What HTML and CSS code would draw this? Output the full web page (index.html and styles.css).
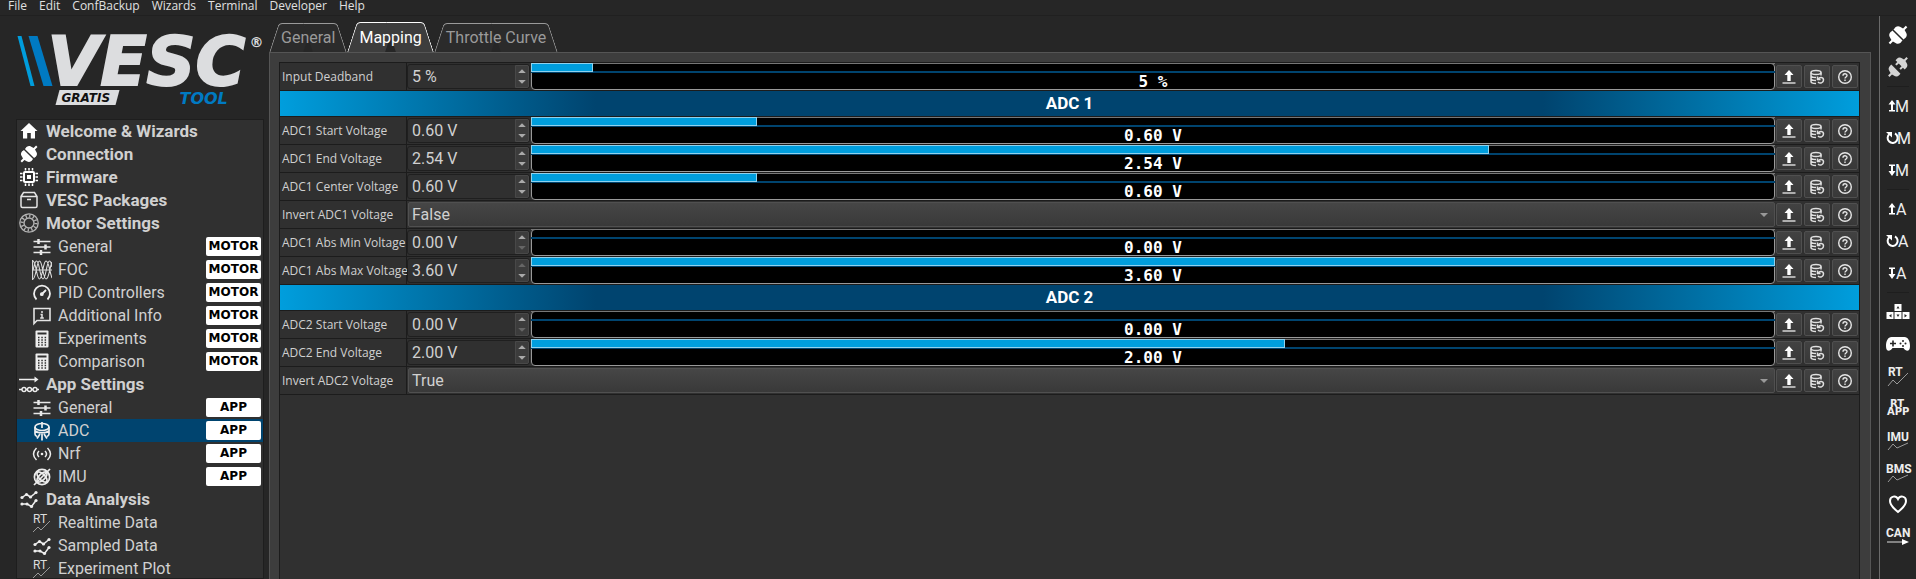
FILE: index.html
```html
<!DOCTYPE html>
<html lang="en">
<head>
    <meta charset="UTF-8">
    <meta name="viewport" content="width=device-width, initial-scale=1.0">
    <title>VESC Tool</title>
    <link rel="stylesheet" href="styles.css">
</head>
<body>
    <!-- Shared icons -->
    <svg class="sprite" aria-hidden="true">
        <symbol id="i-home" viewBox="0 0 20 20"><path d="M10 2 1.500 10H4v7.500h4.200V12h3.600v5.500H16V10h2.500z" fill="#fff"/></symbol>
        <symbol id="i-plug" viewBox="0 0 20 20"><g transform="rotate(-45 10 10)" fill="currentColor"><path d="M9.300 3.500v13H8c-1 .5-4 0-4.600-2.500L2.500 11H-1V9h3.500l.9-3C4 3.500 7 3 8 3.500zM10.700 3.500v13H12c1 .5 4 0 4.600-2.500l.9-3H21V9h-3.500l-.9-3C16 3.500 13 3 12 3.500z"/></g></symbol>
        <symbol id="i-unplug" viewBox="0 0 20 20"><g transform="rotate(-45 10 10)" fill="#d4d4d4"><path d="M7 3.500v13H5c-2 0-3.500-1-4-3.500l-.5-2H-3V9H.5L1 7c.5-2.500 2-3.500 4-3.500zM13 3.500V6h-3v2h3v4h-3v2h3v2.500h2c2 0 3.500-1 4-3.500l.5-2H23V9h-3.500L19 7c-.5-2.500-2-3.500-4-3.500z"/></g></symbol>
        <symbol id="i-chip" viewBox="0 0 20 20" fill="none" stroke="#fff"><rect x="5" y="5" width="10" height="10" rx="1" stroke-width="2"/><rect x="8" y="8" width="4" height="4" fill="#fff" stroke="none"/><path stroke-width="1.500" d="M6.500 1v2.500M10 1v2.500M13.500 1v2.500M6.500 16.500V19M10 16.500V19M13.500 16.500V19M1 6.500h2.500M1 10h2.500M1 13.500h2.500M16.500 6.500H19M16.500 10H19M16.500 13.500H19"/></symbol>
        <symbol id="i-box" viewBox="0 0 20 20" fill="none" stroke="#e4e4e4" stroke-width="1.500"><path d="M2 6.500 4.500 2.500h11L18 6.500V16a1.500 1.500 0 0 1-1.500 1.500h-13A1.500 1.500 0 0 1 2 16zM2 6.500h16M8 9.500h4"/></symbol>
        <symbol id="i-motor" viewBox="0 0 20 20" fill="none" stroke="#b4b4b4"><circle cx="10" cy="10" r="9.200" stroke-width="1.300"/><circle cx="10" cy="10" r="5" stroke-width="1.400"/><circle cx="10" cy="10" r="7" stroke-width="3" stroke-dasharray="1.300 2.360"/></symbol>
        <symbol id="i-sliders" viewBox="0 0 20 20" fill="none" stroke="#e8e8e8" stroke-width="1.500"><path d="M1.500 4.500h17M1.500 10h17M1.500 15.500h17"/><path stroke-width="2.500" d="M6.500 2v5M13.500 7.500v5M9 13v5"/></symbol>
        <symbol id="i-foc" viewBox="0 0 20 20" fill="none" stroke="#ddd" stroke-width="1.100"><path d="M.6 0v20M1 10h19"/><path d="M1 1c3 0 3.500 18 6.500 18S11 1 14 1s3 9 6 17M1 19C4 19 4.500 1 7.500 1S11 19 14 19s3-9 6-17M1 10c1.500-5 2-9 3.500-9 3 0 3.500 18 6.500 18s3.500-18 6.500-18c1 0 2 3 2.500 6"/></symbol>
        <symbol id="i-gauge" viewBox="0 0 20 20" fill="none" stroke="#eee" stroke-width="1.800"><path d="M4.500 16.500A8 8 0 1 1 15.500 16.500M9.500 11.500l4.500-4.500"/><circle cx="9.800" cy="11.200" r="1" fill="#eee"/></symbol>
        <symbol id="i-info" viewBox="0 0 20 20" fill="none" stroke="#e4e4e4" stroke-width="1.600"><path d="M2 17.500v-15h16v12H5z"/><path d="M10 5v2M8.500 8.500H10V12M8.200 12h3.600" stroke-width="1.500"/></symbol>
        <symbol id="i-calc" viewBox="0 0 20 20"><rect x="3.500" y="1.500" width="13" height="17" rx="1" fill="#eee"/><path d="M5.500 4.500h9" stroke="#303030" stroke-width="2"/><path d="M6 8.500h9M6 11h9M6 13.500h9M6 16h9" stroke="#303030" stroke-width="1.300" stroke-dasharray="1.500 1.800"/></symbol>
        <symbol id="i-app" viewBox="0 0 20 20" fill="none" stroke="#eee" stroke-width="1.400"><path d="M0 5.500h17M0 15.500h20"/><path d="M15.500 2.500 19.500 5.500l-4 3z" fill="#eee" stroke="none"/><circle cx="5" cy="15.500" r="2" fill="#303030"/><circle cx="10.500" cy="15.500" r="2" fill="#303030"/><circle cx="16" cy="15.500" r="2" fill="#303030"/></symbol>
        <symbol id="i-adc" viewBox="0 0 20 20" fill="none" stroke="#eee" stroke-width="1.700"><ellipse cx="10" cy="6" rx="7" ry="3.500"/><path d="M10 1v6M3 6v7c0 1 1 2 2 2.500M17 6v7c0 1-1 2-2 2.500M3 10c3 2.500 11 2.500 14 0M8 13l-3 4.500M10 13v6.500M12 13l3 4.500"/></symbol>
        <symbol id="i-nrf" viewBox="0 0 20 20" fill="none" stroke="#eee" stroke-width="1.500"><path d="M4.500 4c-4 4-4 8 0 12M7 7c-2 2-2 4 0 6M15.500 4c4 4 4 8 0 12M13 7c2 2 2 4 0 6"/><circle cx="10" cy="10" r="1.300" fill="#eee" stroke="none"/></symbol>
        <symbol id="i-imu" viewBox="0 0 20 20" fill="none" stroke="#eee" stroke-width="1.700"><circle cx="10" cy="10" r="7.600"/><ellipse cx="10" cy="10" rx="6.500" ry="3" transform="rotate(45 10 10)"/><ellipse cx="10" cy="10" rx="6.500" ry="3" transform="rotate(-45 10 10)"/><path d="M2 18 18 2"/></symbol>
        <symbol id="i-data" viewBox="0 0 20 20" fill="none" stroke="#eee" stroke-width="1.500"><path d="m3 8.500 4.500-3 4 2.500L17 3.500M3 15h5l4.500 2.500L17 11.500"/><g fill="#eee" stroke="none"><circle cx="3" cy="8.500" r="1.600"/><circle cx="7.500" cy="5.500" r="1.600"/><circle cx="11.500" cy="8" r="1.600"/><circle cx="17" cy="3.500" r="1.600"/><circle cx="3" cy="15" r="1.600"/><circle cx="8" cy="15" r="1.600"/><circle cx="12.500" cy="17.500" r="1.600"/><circle cx="17" cy="11.500" r="1.600"/></g></symbol>
        <symbol id="i-up" viewBox="0 0 16 16"><path d="M8 1 3.500 6H6.300v6h3.400V6h2.800z" fill="#fff"/><path d="M1.500 14h13" stroke="#ccc" stroke-width="1.600"/></symbol>
        <symbol id="i-db" viewBox="0 0 16 16" fill="none" stroke="#e0e0e0" stroke-width="1.500"><ellipse cx="7" cy="3.500" rx="5" ry="2"/><path d="M2 3.500v9c0 1.200 2 2 5 2M12 3.500v3M2 6.500c0 1.200 2 2 5 2M2 9.500c0 1.200 2 2 5 2"/><path d="M8.500 7.500v3h3M9.500 10c1-2.500 5-2 5 1s-3.500 4-5.500 2"/></symbol>
        <symbol id="i-help" viewBox="0 0 16 16" fill="none" stroke="#e6e6e6" stroke-width="1.400"><circle cx="8" cy="8" r="6.300"/><path d="M6 6.800c0-2.800 4-2.600 4-.3C10 8 8 8 8 9.600M8 10.600V12"/></symbol>
    </svg>

    <nav class="menubar">
        <a href="#">File</a>
        <a href="#">Edit</a>
        <a href="#">ConfBackup</a>
        <a href="#">Wizards</a>
        <a href="#">Terminal</a>
        <a href="#">Developer</a>
        <a href="#">Help</a>
    </nav>

    <div class="window">
        <aside class="sidebar">
            <svg class="logo" viewBox="0 0 247 80" role="img" aria-label="VESC Tool">
                <path d="M1 16h4l13 50h-4z" fill="#009ddc"/>
                <path d="M12 16h9l15 50h-9z" fill="#007ac2"/>
                <text class="logo-name" x="31" y="65">VESC</text>
                <text class="logo-reg" x="233" y="27">®</text>
                <path d="M43 70h60l-4 15H39z" fill="#dcdddf"/>
                <text class="logo-edition" x="45" y="82">GRATIS</text>
                <text class="logo-tool" x="163" y="84">TOOL</text>
            </svg>
            <nav class="page-list">
                <a class="page top" href="#"><svg class="icon"><use href="#i-home"/></svg>Welcome &amp; Wizards</a>
                <a class="page top" href="#"><svg class="icon"><use href="#i-plug"/></svg>Connection</a>
                <a class="page top" href="#"><svg class="icon"><use href="#i-chip"/></svg>Firmware</a>
                <a class="page top" href="#"><svg class="icon"><use href="#i-box"/></svg>VESC Packages</a>
                <a class="page top" href="#"><svg class="icon"><use href="#i-motor"/></svg>Motor Settings</a>
                <a class="page sub" href="#"><svg class="icon"><use href="#i-sliders"/></svg>General<span class="badge">MOTOR</span></a>
                <a class="page sub" href="#"><svg class="icon"><use href="#i-foc"/></svg>FOC<span class="badge">MOTOR</span></a>
                <a class="page sub" href="#"><svg class="icon"><use href="#i-gauge"/></svg>PID Controllers<span class="badge">MOTOR</span></a>
                <a class="page sub" href="#"><svg class="icon"><use href="#i-info"/></svg>Additional Info<span class="badge">MOTOR</span></a>
                <a class="page sub" href="#"><svg class="icon"><use href="#i-calc"/></svg>Experiments<span class="badge">MOTOR</span></a>
                <a class="page sub" href="#"><svg class="icon"><use href="#i-calc"/></svg>Comparison<span class="badge">MOTOR</span></a>
                <a class="page top" href="#"><svg class="icon"><use href="#i-app"/></svg>App Settings</a>
                <a class="page sub" href="#"><svg class="icon"><use href="#i-sliders"/></svg>General<span class="badge">APP</span></a>
                <a class="page sub selected" href="#"><svg class="icon"><use href="#i-adc"/></svg>ADC<span class="badge">APP</span></a>
                <a class="page sub" href="#"><svg class="icon"><use href="#i-nrf"/></svg>Nrf<span class="badge">APP</span></a>
                <a class="page sub" href="#"><svg class="icon"><use href="#i-imu"/></svg>IMU<span class="badge">APP</span></a>
                <a class="page top" href="#"><svg class="icon"><use href="#i-data"/></svg>Data Analysis</a>
                <a class="page sub" href="#"><svg class="icon" viewBox="0 0 20 20"><text class="rt-small" x="1" y="10">RT</text><path class="plot" d="m1 19 5-5 3 3 9-9"/></svg>Realtime Data</a>
                <a class="page sub" href="#"><svg class="icon"><use href="#i-data"/></svg>Sampled Data</a>
                <a class="page sub" href="#"><svg class="icon" viewBox="0 0 20 20"><text class="rt-small" x="1" y="10">RT</text><path class="plot" d="m1 19 5-5 3 3 9-9"/></svg>Experiment Plot</a>
            </nav>
        </aside>

        <main class="content">
            <div class="tabs">
                <button class="tab" type="button">General</button>
                <button class="tab active" type="button">Mapping</button>
                <button class="tab" type="button">Throttle Curve</button>
            </div>
            <div class="pane">
                <form class="params" id="params">
                    <!-- Parameter rows will be populated here -->
                </form>
            </div>
        </main>

        <div class="toolbar">
            <button type="button" aria-label="Connect"><svg class="tool plug" viewBox="0 0 24 24"><use href="#i-plug" x="1" y="1" width="22" height="22"/></svg></button>
            <button type="button" aria-label="Disconnect"><svg class="tool" viewBox="0 0 24 24"><use href="#i-unplug" x="2" y="2" width="20" height="20"/></svg></button>
            <hr>
            <button type="button" aria-label="Read motor configuration"><svg class="tool" viewBox="0 0 24 24"><path class="solid" d="M6 6 2.500 10.500H5V16H3v1.500h6V16H7v-5.500h2.500z"/><text x="9" y="18">M</text></svg></button>
            <button type="button" aria-label="Read default motor configuration"><svg class="tool" viewBox="0 0 24 24"><path class="line" d="M9 7.500A5 5 0 1 1 3.500 8"/><path class="solid" d="M0 6h6v5.500z"/><text x="11" y="18">M</text></svg></button>
            <button type="button" aria-label="Write motor configuration"><svg class="tool" viewBox="0 0 24 24"><path class="solid" d="M6 18 2.500 13H5V8H3V6.500h6V8H7v5h2.500z"/><text x="9" y="18">M</text></svg></button>
            <hr>
            <button type="button" aria-label="Read app configuration"><svg class="tool" viewBox="0 0 24 24"><path class="solid" d="M6 6 2.500 10.500H5V16H3v1.500h6V16H7v-5.500h2.500z"/><text x="10" y="18">A</text></svg></button>
            <button type="button" aria-label="Read default app configuration"><svg class="tool" viewBox="0 0 24 24"><path class="line" d="M9 7.500A5 5 0 1 1 3.500 8"/><path class="solid" d="M0 6h6v5.500z"/><text x="12" y="18">A</text></svg></button>
            <button type="button" aria-label="Write app configuration"><svg class="tool" viewBox="0 0 24 24"><path class="solid" d="M6 18 2.500 13H5V8H3V6.500h6V8H7v5h2.500z"/><text x="10" y="18">A</text></svg></button>
            <hr>
            <button type="button" aria-label="Keyboard control"><svg class="tool" viewBox="0 0 24 24"><path class="solid" d="M8.500 4h7v7h-7zM.5 12h7v7h-7zM8.500 12h7v7h-7zM16.500 12h7v7h-7z"/><path d="M10.500 8.500 12 6l1.500 2.500zM5.500 14v3.500L3 15.700zM10.500 14.500h3L12 17zM18.500 14v3.500l2.500-1.800z" fill="#262626"/></svg></button>
            <button type="button" aria-label="Gamepad control"><svg class="tool" viewBox="0 0 24 24"><path class="solid" d="M5.500 5h13C22 5 24 9 24 14c0 6-4 6-6.500 2h-11C4 20 0 20 0 14 0 9 2 5 5.500 5z"/><path d="M4 11.500h6M7 8.500v6" stroke="#262626" stroke-width="1.600"/><g fill="#262626"><circle cx="17" cy="9" r="1"/><circle cx="17" cy="14" r="1"/><circle cx="14.500" cy="11.500" r="1"/><circle cx="19.500" cy="11.500" r="1"/></g></svg></button>
            <button type="button" aria-label="Realtime data"><svg class="tool" viewBox="0 0 24 24"><text class="caption" x="2" y="12">RT</text><path class="plot" d="m2 22 5-6 4 4 11-11"/></svg></button>
            <button type="button" aria-label="Realtime app data"><svg class="tool" viewBox="0 0 24 24"><text class="heavy" x="4" y="11">RT</text><text class="heavy" x="1" y="19">APP</text></svg></button>
            <button type="button" aria-label="IMU data"><svg class="tool" viewBox="0 0 24 24"><text class="caption" x="1" y="13">IMU</text><path class="plot" d="m2 22 5-6 4 4 11-5"/></svg></button>
            <button type="button" aria-label="BMS data"><svg class="tool" viewBox="0 0 24 24"><text class="caption" x="0" y="13">BMS</text><path class="plot" d="m2 22 5-6 4 4 11-5"/></svg></button>
            <button type="button" aria-label="Keep alive"><svg class="tool" viewBox="0 0 24 24"><path class="line" d="M12 20C7 16 4 13 4 9c0-5 6-6 8-2 2-4 8-3 8 2 0 4-3 7-8 11z"/></svg></button>
            <button type="button" aria-label="CAN forwarding"><svg class="tool" viewBox="0 0 24 24"><text class="caption" x="0" y="13">CAN</text><path d="M1 18h17" stroke="#ddd"/><path class="solid" d="m16 15 7 3-7 3z"/></svg></button>
        </div>
    </div>

    <script>
        const params = [
            { label: 'Input Deadband', value: '5 %', fill: 5 },
            { title: 'ADC 1' },
            { label: 'ADC1 Start Voltage', value: '0.60 V', fill: 18.2 },
            { label: 'ADC1 End Voltage', value: '2.54 V', fill: 77 },
            { label: 'ADC1 Center Voltage', value: '0.60 V', fill: 18.2 },
            { label: 'Invert ADC1 Voltage', options: ['False', 'True'] },
            { label: 'ADC1 Abs Min Voltage', value: '0.00 V', fill: 0 },
            { label: 'ADC1 Abs Max Voltage', value: '3.60 V', fill: 100 },
            { title: 'ADC 2' },
            { label: 'ADC2 Start Voltage', value: '0.00 V', fill: 0 },
            { label: 'ADC2 End Voltage', value: '2.00 V', fill: 60.6 },
            { label: 'Invert ADC2 Voltage', options: ['True', 'False'] },
        ];

        // Spin box and bar for a number, drop-down for a boolean
        function renderEditor(param, id) {
            if (param.options) {
                return `
                    <div class="combo">
                        <select id="${id}">${param.options.map(o => `<option>${o}</option>`).join('')}</select>
                    </div>`;
            }
            return `
                <div class="spin">
                    <input type="text" id="${id}" value="${param.value}">
                    <div class="steps">
                        <button type="button" class="step up" aria-label="Increase" ${param.fill === 100 ? 'disabled' : ''}></button>
                        <button type="button" class="step down" aria-label="Decrease" ${param.fill === 0 ? 'disabled' : ''}></button>
                    </div>
                </div>
                <div class="bar">
                    <div class="track">${param.fill ? `<div class="fill" style="width: ${param.fill}%"></div>` : ''}</div>
                    <span class="bar-text">${param.value}</span>
                </div>`;
        }

        document.getElementById('params').innerHTML = params.map((param, i) => {
            if (param.title) {
                return `<h2 class="group">${param.title}</h2>`;
            }
            const id = `param-${i}`;
            return `
                <div class="param">
                    <label for="${id}">${param.label}</label>
                    ${renderEditor(param, id)}
                    <div class="actions">
                        <button type="button" aria-label="Read current"><svg><use href="#i-up"/></svg></button>
                        <button type="button" aria-label="Read default"><svg><use href="#i-db"/></svg></button>
                        <button type="button" aria-label="Help"><svg><use href="#i-help"/></svg></button>
                    </div>
                </div>`;
        }).join('');
    </script>
</body>
</html>
```
FILE: styles.css
```css
* {
    box-sizing: border-box;
}
body {
    font-family: Roboto, sans-serif;
    font-size: 16px;
    margin: 0;
    height: 100vh;
    overflow: hidden;
    display: flex;
    flex-direction: column;
    background-color: #262626;
    color: #d0d0d0;
}
a {
    color: inherit;
    text-decoration: none;
}
button {
    font: inherit;
    color: inherit;
    padding: 0;
    border: none;
    background: none;
}
.sprite {
    display: none;
}

/* Menu bar */
.menubar {
    display: flex;
    gap: 12px;
    height: 16px;
    padding-left: 8px;
    border-bottom: 1px solid #202020;
    font-family: "Open Sans", sans-serif;
    font-size: 12px;
    line-height: 12px;
    color: #e0e0e0;
}
.window {
    flex: 1;
    min-height: 0;
    display: flex;
}

/* Sidebar */
.sidebar {
    width: 264px;
    padding-left: 16px;
    display: flex;
    flex-direction: column;
}
.logo {
    flex: none;
    height: 80px;
    margin: 4px 0 19px;
    overflow: visible;
    font-family: "DejaVu Sans", sans-serif;
    font-weight: bold;
    font-style: italic;
}
.logo-name {
    font-size: 68px;
    fill: #dcdddf;
    stroke: #dcdddf;
    stroke-width: 2px;
}
.logo-reg {
    font-size: 14px;
    font-style: normal;
    fill: #dcdddf;
}
.logo-edition {
    font-size: 12px;
    fill: #111;
}
.logo-tool {
    font-size: 16px;
    fill: #007ac2;
}
.page-list {
    flex: 1;
    min-height: 0;
    overflow: hidden;
    background-color: #303030;
    border: 1px solid #1e1e1e;
}
.page {
    display: flex;
    align-items: center;
    height: 23px;
    padding: 0 2px;
}
.page.top {
    padding-bottom: 1px;
    font-size: 17px;
    font-weight: bold;
    gap: 7px;
}
.page.sub {
    padding-left: 15px;
    gap: 6px;
}
.page.selected {
    background-color: #00446f;
}
.icon {
    width: 20px;
    height: 20px;
    color: #fff;
}
.badge {
    margin-left: auto;
    width: 55px;
    height: 19px;
    border-radius: 2px;
    background-color: #fff;
    color: #000;
    font: bold 12px/19px "DejaVu Sans", sans-serif;
    text-align: center;
}
.rt-small {
    font: 12px Roboto, sans-serif;
    fill: #ddd;
}
.plot {
    fill: none;
    stroke: #999;
}

/* Tabs */
.content {
    flex: 1;
    min-width: 0;
    padding: 6px 8px 0 5px;
    display: flex;
    flex-direction: column;
}
.tabs {
    display: flex;
    align-items: flex-end;
    height: 30px;
}
.tab {
    position: relative;
    isolation: isolate;
    height: 29px;
    padding: 0 12px;
    color: #9a9a9a;
}
.tab::before,
.tab::after {
    content: "";
    position: absolute;
    z-index: -1;
    top: 0;
    bottom: 0;
    background-color: #2b2b2b;
    border-top: 1px solid #9a9a9a;
}
.tab::before {
    left: 5px;
    right: 50%;
    border-left: 1px solid #9a9a9a;
    border-top-left-radius: 4px;
    transform: skewX(-18deg);
}
.tab::after {
    left: 50%;
    right: 5px;
    border-right: 1px solid #9a9a9a;
    border-top-right-radius: 4px;
    transform: skewX(18deg);
}
.tab.active {
    height: 30px;
    color: #fff;
}
.tab.active::before,
.tab.active::after {
    background-color: #3d3d3d;
    border-color: #fff;
}
.pane {
    flex: 1;
    min-height: 0;
    padding: 9px 10px 0 9px;
    background-color: #3d3d3d;
    border: 1px solid #555;
    border-bottom: none;
}
.params {
    height: 100%;
    background-color: #303030;
    border: 1px solid #1c1c1c;
    border-bottom: none;
}

/* Parameter rows */
.param {
    display: flex;
    height: 28px;
    border-bottom: 1px solid #1c1c1c;
}
.param label {
    width: 127px;
    padding-left: 2px;
    border-right: 1px solid #1c1c1c;
    font-family: "Open Sans", sans-serif;
    font-size: 12px;
    line-height: 28px;
    white-space: nowrap;
}
.group {
    height: 26px;
    margin: 0;
    border-bottom: 1px solid #1c1c1c;
    background: linear-gradient(to right, #009edd, #00446f 20%, #00446f 80%, #009edd);
    color: #fff;
    font-size: 17px;
    line-height: 25px;
    text-align: center;
}
.spin {
    display: flex;
    width: 123px;
    height: 25px;
    margin: 1px 1px 0 0;
    border: 1px solid #1f1f1f;
    border-radius: 3px;
}
.spin input {
    flex: 1;
    min-width: 0;
    padding: 0 0 0 4px;
    border: none;
    background: none;
    color: inherit;
    font: inherit;
}
.steps {
    display: flex;
    flex-direction: column;
    width: 14px;
    background-color: #3c3c3c;
    border: 1px solid #484848;
    border-radius: 0 2px 2px 0;
}
.step {
    flex: 1;
    display: flex;
    align-items: center;
    justify-content: center;
}
.step::before {
    content: "";
    width: 8px;
    height: 4px;
    background-color: #aaa;
    clip-path: polygon(50% 0, 100% 100%, 0 100%);
}
.step.down::before {
    clip-path: polygon(0 0, 100% 0, 50% 100%);
}
.step:disabled::before {
    background-color: #666;
}
.bar {
    flex: 1;
    height: 27px;
    background-color: #000;
    border: 1px solid #999;
    border-radius: 4px;
    font: bold 16px/17px "DejaVu Sans Mono", monospace;
    color: #fff;
    text-align: center;
}
.track {
    height: 10px;
    margin: -1px -1px 0;
    border-top: 1px solid #777;
    border-bottom: 2px solid #00446f;
}
.fill {
    height: 9px;
    margin-top: -1px;
    background-color: #009edd;
    border: 1px solid #8fd2ee;
}
.bar-text {
    display: block;
}
.combo {
    position: relative;
    flex: 1;
    padding: 1px 0 1px 1px;
}
.combo select {
    display: block;
    width: 100%;
    height: 25px;
    padding: 0 3px;
    appearance: none;
    border: 1px solid #505050;
    border-radius: 2px;
    background: linear-gradient(#464646, #393939);
    color: inherit;
    font: inherit;
}
.combo::after {
    content: "";
    position: absolute;
    right: 7px;
    top: 12px;
    width: 8px;
    height: 4px;
    background-color: #999;
    clip-path: polygon(0 0, 100% 0, 50% 100%);
}
.actions {
    display: flex;
    gap: 2px;
    padding: 2px 1px;
}
.actions button {
    display: grid;
    place-items: center;
    width: 26px;
    height: 23px;
    background: linear-gradient(#424242, #383838);
    border: 1px solid #505050;
    border-radius: 2px;
}
.actions svg {
    width: 16px;
    height: 16px;
}

/* Right toolbar */
.toolbar {
    width: 37px;
    padding: 3px 0 0;
    border-left: 1px solid #6a6a6a;
    display: flex;
    flex-direction: column;
    align-items: center;
}
.toolbar button {
    flex: none;
    display: grid;
    place-items: center;
    width: 32px;
    height: 32px;
}
.toolbar hr {
    flex: none;
    width: 22px;
    height: 1px;
    margin: 3px 0;
    border: none;
    background-color: #1e1e1e;
}
.tool {
    width: 24px;
    height: 24px;
    overflow: visible;
    font-size: 16px;
    fill: #eee;
}
.plug {
    color: #fff;
}
.tool .solid {
    fill: #fff;
}
.tool .line {
    fill: none;
    stroke: #fff;
    stroke-width: 2;
}
.tool .plot {
    fill: none;
}
.caption {
    font: bold 12px Roboto, sans-serif;
}
.heavy {
    font: bold 10px "DejaVu Sans", sans-serif;
}
```
